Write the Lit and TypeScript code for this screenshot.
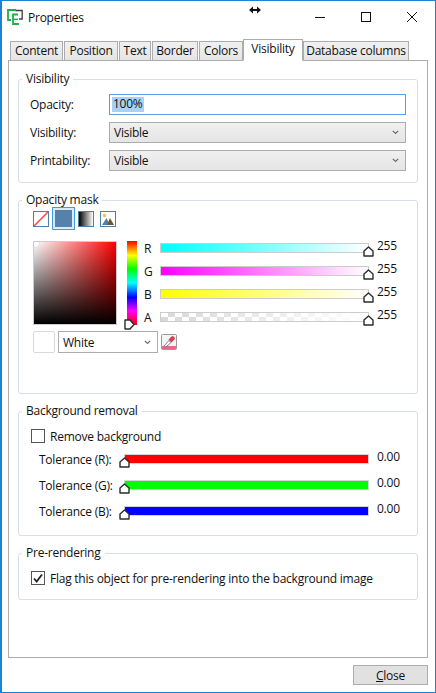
import { LitElement, html, css } from "lit";
import { customElement } from "lit/decorators.js";

const chevron = html`<svg class="chev" width="7" height="5" viewBox="0 0 7 5"><path d="M.8 .8 L3.5 3.5 L6.2 .8" fill="none" stroke="#666" stroke-width="1.1"/></svg>`;
const thumbUp = html`<svg class="thumb" width="11" height="11" viewBox="0 0 11 11"><path d="M5.5 1 L10 5 V10 H1 V5 Z" fill="#fff" stroke="#2b2b2b" stroke-width="1.4" stroke-linejoin="round"/></svg>`;

@customElement("app-root")
export class AppRoot extends LitElement {
  static styles = css`
    :host { display: block; width: 436px; height: 693px; box-sizing: border-box; background: #fff; border: 1px solid #1883d7; border-left-width: 2px; position: relative; overflow: hidden; font: 12px "Open Sans", sans-serif; letter-spacing: -0.24px; color: #111; }
    .title { height: 38px; display: flex; align-items: center; padding: 0 0 6px 5px; box-sizing: border-box; }
    .logo { flex: none; margin-right: 5px; }
    .title .name { flex: 1; }
    .cursor { position: absolute; left: 247px; top: 5px; }
    .winbtn { width: 46px; display: flex; justify-content: center; }
    .tabs { display: flex; align-items: flex-end; height: 22px; margin: 0 0 -1px 8px; position: relative; z-index: 1; }
    .tab { height: 20px; box-sizing: border-box; display: flex; align-items: center; justify-content: center; border: 1px solid #acacac; margin-right: 1px; padding-bottom: 1px; background: linear-gradient(#f0f0f0,#e5e5e5); }
    .t1 { width: 53px; } .t2 { width: 54px; } .t3 { width: 32px; } .t4 { width: 46px; } .t5 { width: 44px; margin-right: 0; } .t7 { width: 106px; }
    .tab.active { width: 60px; height: 22px; background: #fff; border-bottom-color: #fff; margin: 0; padding-bottom: 3px; }
    .frame { margin-left: 6px; width: 420px; height: 598px; box-sizing: border-box; border: 1px solid #acacac; padding: 10px 9px 0; display: flex; flex-direction: column; gap: 9px; }
    fieldset { margin: 0; padding: 0; border: 1px solid #d5dfe5; border-radius: 3px; box-sizing: border-box; width: 400px; min-width: 0; }
    legend { padding: 0 4px; margin-left: 3px; height: 16px; line-height: 16px; }
    .g1 { height: 112px; } .g2 { height: 202px; } .g3 { height: 133px; } .g4 { height: 55px; }
    .form { display: grid; grid-template-columns: 79px 297px; grid-auto-rows: 21px; row-gap: 7px; padding: 7px 0 0 11px; align-items: center; }
    .input { height: 21px; box-sizing: border-box; border: 1px solid #569de5; display: flex; align-items: center; padding-left: 2px; }
    .sel { background: #a8d1f5; height: 15px; line-height: 14px; padding: 0 1px; }
    .combo { height: 21px; box-sizing: border-box; border: 1px solid #acacac; background: linear-gradient(#f0f0f0,#e5e5e5); display: flex; align-items: center; justify-content: space-between; padding: 0 6px 0 4px; }
    .brushes { display: flex; align-items: center; height: 21px; padding-left: 14px; }
    .brush { width: 16px; height: 16px; box-sizing: border-box; border: 1px solid #4f7ea6; display: block; }
    .brush.solid { width: 21px; height: 21px; background: #5581aa; border: 2px solid #dbeaf8; outline: 1px solid #3f9ae8; outline-offset: 0; margin: 0 4px 0 4px; }
    .brush.grad { background: linear-gradient(to right, #000, #fff); }
    .brush.img { margin-left: 6px; }
    .picker { display: flex; margin: 12px 0 0 14px; height: 84px; }
    .sv { width: 84px; height: 84px; box-sizing: border-box; border: 1px solid #ccc; position: relative; background: linear-gradient(to top,#000,transparent), linear-gradient(to right,#fff,#f00); }
    .sv::after { content: ""; position: absolute; left: -3px; top: -3px; width: 7px; height: 7px; border-radius: 50%; background: #fff; border: 1px solid #ddd; clip-path: inset(3px 0 0 3px); }
    .hue { width: 10px; height: 84px; margin-left: 10px; position: relative; background: linear-gradient(#f00,#ff0 17%,#0f0 33%,#0ff 50%,#00f 67%,#f0f 83%,#f00); }
    .hue svg { position: absolute; left: -3px; top: 78px; }
    .channels { margin-left: 7px; display: grid; grid-template-columns: 16px 209px auto; grid-auto-rows: 23px; padding-top: 1px; align-items: start; }
    .channels .l { line-height: 14px; }
    .bar { height: 10px; box-sizing: border-box; border: 1px solid #ccc; position: relative; margin-top: 1px; }
    .bar .thumb { position: absolute; right: -6px; top: 2px; }
    .r { background: linear-gradient(to right,#0ff,#fff); }
    .g { background: linear-gradient(to right,#f0f,#fff); }
    .b { background: linear-gradient(to right,#ff0,#fff); }
    .a { background: linear-gradient(to right,rgba(255,255,255,0),#fff), repeating-conic-gradient(#d8d8d8 0 25%, #fff 0 50%) 0 0/14px 8px; }
    .v { padding-left: 8px; line-height: 14px; margin-top: -3px; }
    .colorrow { display: flex; align-items: center; margin: 6px 0 0 14px; height: 22px; }
    .swatch { width: 22px; height: 22px; box-sizing: border-box; border: 1px solid #d9d9d9; border-radius: 2px; }
    .wcombo { width: 100px; height: 22px; box-sizing: border-box; margin-left: 3px; border: 1px solid #acacac; display: flex; align-items: center; justify-content: space-between; padding: 0 6px 0 4px; }
    .drop { margin-left: 3px; display: block; }
    .check { display: flex; align-items: center; gap: 5px; padding: 10px 0 0 12px; height: 14px; }
    .box { width: 14px; height: 14px; box-sizing: border-box; border: 1px solid #555; flex: none; display: block; }
    .tol { display: grid; grid-template-columns: 85px 245px auto; grid-auto-rows: 26px; padding: 4px 0 0 20px; align-items: center; }
    .tol .lab { margin-top: -2px; }
    .tol .bar { height: 10px; margin-top: -2px; border: 1px solid #d5d5d5; }
    .tol .thumb { left: -6px; right: auto; top: 2px; }
    .tr { background: #f00; } .tg { background: #0f0; } .tb { background: #00f; }
    .tol .v { margin-top: -6px; }
    .foot { display: flex; justify-content: flex-end; padding: 7px 7px 0 0; }
    .close { width: 75px; height: 20px; box-sizing: border-box; border: 1px solid #adadad; background: #e1e1e1; display: flex; align-items: center; justify-content: center; }
    u { text-underline-offset: 1px; }
  `;

  render() {
    const channels = [["R", "r"], ["G", "g"], ["B", "b"], ["A", "a"]];
    const tol = [["R", "tr"], ["G", "tg"], ["B", "tb"]];
    return html`
      <div class="title">
        <svg class="logo" width="16" height="16" viewBox="0 0 16 16" fill="none">
          <path d="M8 1.5 H15.2 V10 H12" stroke="#3c3c3c" stroke-width="1.3"/>
          <path d="M9 1 H1 V11 H4" stroke="#1fae4c" stroke-width="1.8"/>
          <path d="M11 5.5 H6 V15 H12" stroke="#1fae4c" stroke-width="1.8"/>
          <path d="M6 10.3 H11" stroke="#1fae4c" stroke-width="1.4"/>
        </svg>
        <span class="name">Properties</span>
        <span class="winbtn"><svg width="10" height="10" viewBox="0 0 10 10"><path d="M0 5.5 H10" stroke="#111"/></svg></span>
        <span class="winbtn"><svg width="10" height="10" viewBox="0 0 10 10"><rect x=".5" y=".5" width="9" height="9" fill="none" stroke="#111"/></svg></span>
        <span class="winbtn"><svg width="10" height="10" viewBox="0 0 10 10"><path d="M0 0 L10 10 M10 0 L0 10" stroke="#111"/></svg></span>
      </div>
      <svg class="cursor" width="12" height="8" viewBox="0 0 12 8"><path d="M0 4 L4 0.5 V3 H8 V0.5 L12 4 L8 7.5 V5 H4 V7.5 Z" fill="#111"/></svg>
      <div class="tabs">
        <div class="tab t1">Content</div><div class="tab t2">Position</div><div class="tab t3">Text</div><div class="tab t4">Border</div><div class="tab t5">Colors</div>
        <div class="tab active">Visibility</div>
        <div class="tab t7">Database columns</div>
      </div>
      <div class="frame">
        <fieldset class="g1">
          <legend>Visibility</legend>
          <div class="form">
            <span>Opacity:</span><div class="input"><span class="sel">100%</span></div>
            <span>Visibility:</span><div class="combo"><span>Visible</span>${chevron}</div>
            <span>Printability:</span><div class="combo"><span>Visible</span>${chevron}</div>
          </div>
        </fieldset>
        <fieldset class="g2">
          <legend>Opacity mask</legend>
          <div class="brushes">
            <svg class="brush" viewBox="0 0 14 14"><path d="M0 14 L14 0" stroke="#f44" stroke-width="1.5"/></svg>
            <span class="brush solid"></span>
            <span class="brush grad"></span>
            <svg class="brush img" viewBox="0 0 14 14">
              <circle cx="3.5" cy="3.5" r="1.8" fill="#f5c542"/>
              <path d="M1 13 L5.5 6 L9 13 Z" fill="#5581aa"/>
              <path d="M6 13 L9 6 L13 13 Z" fill="#6b5a2e"/>
            </svg>
          </div>
          <div class="picker">
            <div class="sv"></div>
            <div class="hue"><svg width="11" height="11" viewBox="0 0 11 11"><path d="M1 1 H6 L10 5.5 L6 10 H1 Z" fill="#fff" stroke="#2b2b2b" stroke-width="1.4" stroke-linejoin="round"/></svg></div>
            <div class="channels">
              ${channels.map(([n, c]) => html`<span class="l">${n}</span><div class="bar ${c}">${thumbUp}</div><span class="v">255</span>`)}
            </div>
          </div>
          <div class="colorrow">
            <span class="swatch"></span>
            <div class="wcombo"><span>White</span>${chevron}</div>
            <svg class="drop" width="16" height="16" viewBox="0 0 16 16">
              <rect x=".5" y=".5" width="15" height="15" rx="1" fill="#f4f4f4" stroke="#9a9a9a"/>
              <rect x="1" y="12" width="14" height="3" fill="#f0648c"/>
              <path d="M3 12 L8 6.5 L10 8.5 L5 13 Z" fill="#fff" stroke="#666" stroke-width=".8"/>
              <path d="M7.5 5.5 L10.5 2.5 L12 2 L14 4 L13.5 5.5 L10.5 8.5 Z" fill="#d8434f"/>
            </svg>
          </div>
        </fieldset>
        <fieldset class="g3">
          <legend>Background removal</legend>
          <label class="check"><span class="box"></span><span>Remove background</span></label>
          <div class="tol">
            ${tol.map(([n, c]) => html`<span class="lab">Tolerance (${n}):</span><div class="bar ${c}">${thumbUp}</div><span class="v">0.00</span>`)}
          </div>
        </fieldset>
        <fieldset class="g4">
          <legend>Pre-rendering</legend>
          <label class="check">
            <svg class="box" viewBox="0 0 12 12"><path d="M2 6.5 L4.7 9.5 L10 2.5" fill="none" stroke="#222" stroke-width="1.8"/></svg>
            <span>Flag this object for pre-rendering into the background image</span>
          </label>
        </fieldset>
      </div>
      <div class="foot"><div class="close"><span><u>C</u>lose</span></div></div>
    `;
  }
}
